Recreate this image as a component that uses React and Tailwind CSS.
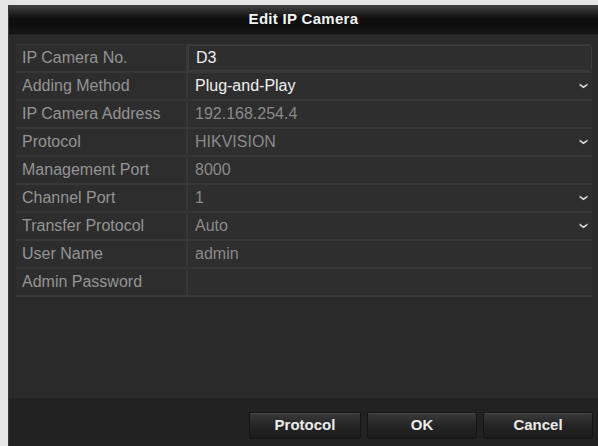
import React from 'react';

const rows = [
    { label: 'IP Camera No.', value: 'D3', active: true },
    { label: 'Adding Method', value: 'Plug-and-Play', active: true, select: true },
    { label: 'IP Camera Address', value: '192.168.254.4' },
    { label: 'Protocol', value: 'HIKVISION', select: true },
    { label: 'Management Port', value: '8000' },
    { label: 'Channel Port', value: '1', select: true },
    { label: 'Transfer Protocol', value: 'Auto', select: true },
    { label: 'User Name', value: 'admin' },
    { label: 'Admin Password', value: '' },
];

const Chevron = () => (
    <svg width="9" height="6" viewBox="0 0 9 6" className="shrink-0">
        <path d="M0.5 0.5 L4.5 3.2 L8.5 0.5 L8.5 2.3 L4.5 5.2 L0.5 2.3 Z" fill="#e0e0e0" />
    </svg>
);

const Button = ({ children, w }) => (
    <button className={`${w} h-[27px] rounded-[2px] border border-[#151515] bg-gradient-to-b from-[#3a3a3a] via-[#252525] to-[#1b1b1b] text-[15px] font-bold text-[#ececec] shadow-[inset_0_1px_0_#474747]`}>
        {children}
    </button>
);

export default function App() {
    return (
        <div className="w-[598px] h-[446px] bg-[#e6e6e6] pt-[5px] pl-[8px] overflow-hidden" style={{ fontFamily: '"Liberation Sans", Arial, sans-serif' }}>
            <div className="w-[590px] h-[441px] flex flex-col bg-[#2a2a2a] border-l border-[#3a3a3a]">
                {/* Title */}
                <div className="h-[30px] shrink-0 flex items-center justify-center bg-gradient-to-b from-[#444] via-[#0c0c0c] to-[#161616] border-b border-[#202020]">
                    <span className="text-[15px] font-bold text-[#f4f4f4] tracking-[0.3px]">Edit IP Camera</span>
                </div>

                {/* Fields */}
                <div className="flex-1 pt-[9px] pl-[7px] pr-[6px]">
                    <div className="flex flex-col border-t border-[#363636]">
                        {rows.map((r) => (
                            <div key={r.label} className="h-[28px] flex border-b-2 border-[#373737]">
                                <div className="w-[172px] shrink-0 flex items-center pl-[6px] text-[16px] text-[#949494] border-r-2 border-[#373737] bg-[#2d2d2d]">
                                    {r.label}
                                </div>
                                <div className={`flex-1 flex items-center justify-between pl-[7px] pr-[4px] text-[16px] bg-[#2e2e2e] ${r.active ? 'text-[#f0f0f0]' : 'text-[#8a8a8a]'} ${r.label === 'IP Camera No.' ? 'border border-[#3c3c3c] rounded-r-[3px]' : ''}`}>
                                    <span>{r.value}</span>
                                    {r.select && <Chevron />}
                                </div>
                            </div>
                        ))}
                    </div>
                </div>

                {/* Footer */}
                <div className="h-[48px] shrink-0 bg-[#222] border-t border-[#262626] flex justify-end items-start pt-[13px] pr-[5px] gap-[6px]">
                    <Button w="w-[112px]">Protocol</Button>
                    <Button w="w-[110px]">OK</Button>
                    <Button w="w-[110px]">Cancel</Button>
                </div>
            </div>
        </div>
    );
}
